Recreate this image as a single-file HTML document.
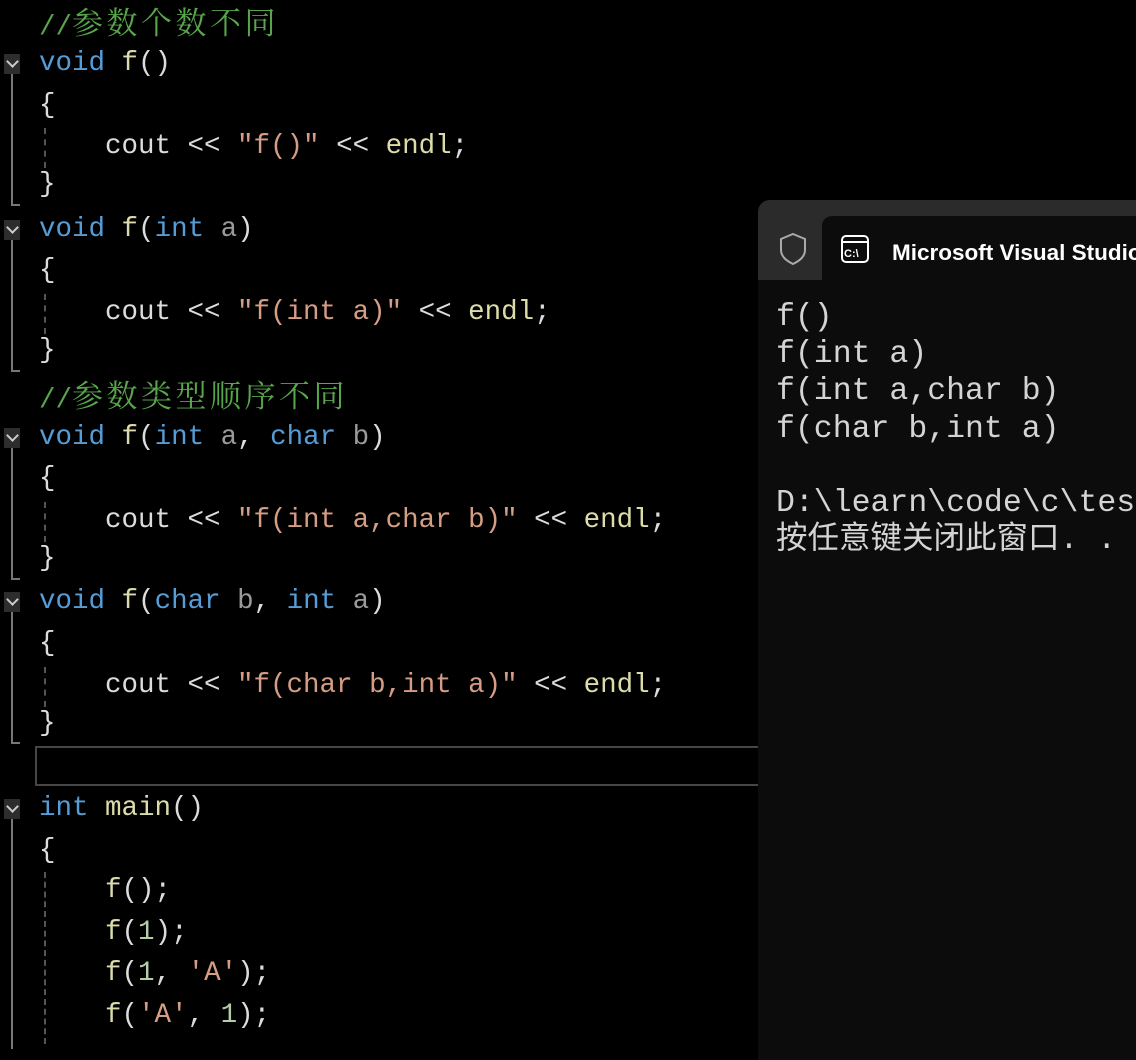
<!DOCTYPE html>
<html><head><meta charset="utf-8"><style>
body{margin:0;width:1136px;height:1044px;background:#000;overflow:hidden;position:relative;font-family:"Liberation Mono","Noto Sans CJK SC",monospace;}
.l{position:absolute;left:39px;height:41px;line-height:41px;font-size:27.5px;white-space:pre;color:#dcdcdc;}
.k{color:#569cd6}.f{color:#dcdcaa}.s{color:#d69d85}.c{color:#57a64a}.p{color:#9a9a9a}.n{color:#b5cea8}
.cj{font-family:"Noto Serif CJK SC",serif;font-size:31px;letter-spacing:3.5px}
.fold{position:absolute;left:4px;width:16px;height:20px;background:#2d2d2d;}
.fold:after{content:"";position:absolute;left:4px;top:3px;width:7px;height:7px;border-right:2px solid #ccc;border-bottom:2px solid #ccc;transform:rotate(45deg);}
.vl{position:absolute;left:11px;width:2px;background:#777;}
.end{position:absolute;left:11px;width:9px;height:2px;background:#777;}
.dg{position:absolute;left:44px;width:0;border-left:2px dashed #555;}
.term{position:absolute;left:758px;top:200px;width:400px;height:860px;background:#0c0c0c;border-radius:12px 0 0 0;overflow:hidden;}
.bar{position:absolute;left:0;top:0;right:0;height:80px;background:#2b2b2b;}
.tab{position:absolute;left:64px;top:16px;right:0;height:64px;background:#0c0c0c;border-radius:10px 0 0 0;}
.tt{position:absolute;left:134px;top:35px;color:#fff;font:bold 22.5px "Liberation Sans",sans-serif;white-space:nowrap;}
.to{position:absolute;left:18px;top:99px;color:#d4d4d4;font-size:31.5px;line-height:37.2px;white-space:pre;font-family:"Liberation Mono","Noto Sans CJK SC",monospace;}
</style></head><body>
<div class="l c" style="top:0px">//<span class="cj">参数个数不同</span></div>
<div class="l" style="top:43px"><span class="k">void</span> <span class="f">f</span>()</div>
<div class="l" style="top:85px">{</div>
<div class="l" style="top:126px">    cout &lt;&lt; <span class="s">"f()"</span> &lt;&lt; <span class="f">endl</span>;</div>
<div class="l" style="top:164px">}</div>
<div class="l" style="top:209px"><span class="k">void</span> <span class="f">f</span>(<span class="k">int</span> <span class="p">a</span>)</div>
<div class="l" style="top:250px">{</div>
<div class="l" style="top:292px">    cout &lt;&lt; <span class="s">"f(int a)"</span> &lt;&lt; <span class="f">endl</span>;</div>
<div class="l" style="top:330px">}</div>
<div class="l c" style="top:373px">//<span class="cj">参数类型顺序不同</span></div>
<div class="l" style="top:417px"><span class="k">void</span> <span class="f">f</span>(<span class="k">int</span> <span class="p">a</span>, <span class="k">char</span> <span class="p">b</span>)</div>
<div class="l" style="top:458px">{</div>
<div class="l" style="top:500px">    cout &lt;&lt; <span class="s">"f(int a,char b)"</span> &lt;&lt; <span class="f">endl</span>;</div>
<div class="l" style="top:538px">}</div>
<div class="l" style="top:581px"><span class="k">void</span> <span class="f">f</span>(<span class="k">char</span> <span class="p">b</span>, <span class="k">int</span> <span class="p">a</span>)</div>
<div class="l" style="top:623px">{</div>
<div class="l" style="top:665px">    cout &lt;&lt; <span class="s">"f(char b,int a)"</span> &lt;&lt; <span class="f">endl</span>;</div>
<div class="l" style="top:703px">}</div>
<div style="position:absolute;left:35px;top:746px;width:740px;height:36px;border:2px solid #464646"></div>
<div class="l" style="top:788px"><span class="k">int</span> <span class="f">main</span>()</div>
<div class="l" style="top:830px">{</div>
<div class="l" style="top:870px">    <span class="f">f</span>();</div>
<div class="l" style="top:912px">    <span class="f">f</span>(<span class="n">1</span>);</div>
<div class="l" style="top:953px">    <span class="f">f</span>(<span class="n">1</span>, <span class="s">'A'</span>);</div>
<div class="l" style="top:995px">    <span class="f">f</span>(<span class="s">'A'</span>, <span class="n">1</span>);</div>

<div class="fold" style="top:54px"></div><div class="vl" style="top:74px;height:132px"></div><div class="end" style="top:204px"></div>
<div class="fold" style="top:220px"></div><div class="vl" style="top:240px;height:132px"></div><div class="end" style="top:370px"></div>
<div class="fold" style="top:428px"></div><div class="vl" style="top:448px;height:132px"></div><div class="end" style="top:578px"></div>
<div class="fold" style="top:592px"></div><div class="vl" style="top:612px;height:132px"></div><div class="end" style="top:742px"></div>
<div class="fold" style="top:799px"></div><div class="vl" style="top:819px;height:230px"></div>
<div class="dg" style="top:128px;height:40px"></div>
<div class="dg" style="top:294px;height:40px"></div>
<div class="dg" style="top:502px;height:40px"></div>
<div class="dg" style="top:667px;height:40px"></div>
<div class="dg" style="top:872px;height:172px"></div>

<div class="term">
<div class="bar"></div>
<svg style="position:absolute;left:20px;top:32px" width="30" height="34" viewBox="0 0 30 34"><path d="M15 2 L27 7 V18 C27 25 21 29 15 32 C9 29 3 25 3 18 V7 Z" fill="none" stroke="#aaa" stroke-width="2"/></svg>
<div class="tab"></div>
<svg style="position:absolute;left:82px;top:34px" width="30" height="30" viewBox="0 0 30 30"><rect x="2" y="2" width="26" height="26" rx="4" fill="none" stroke="#fff" stroke-width="2"/><line x1="2" y1="8" x2="28" y2="8" stroke="#fff" stroke-width="2"/><text x="4" y="23" fill="#fff" font-size="11" font-family="Liberation Sans" font-weight="bold">C:\</text></svg>
<div class="tt">Microsoft Visual Studio 调试控制台</div>
<div class="to">f()
f(int a)
f(int a,char b)
f(char b,int a)

D:\learn\code\c\test
按任意键关闭此窗口. . .</div>
</div>
</body></html>
